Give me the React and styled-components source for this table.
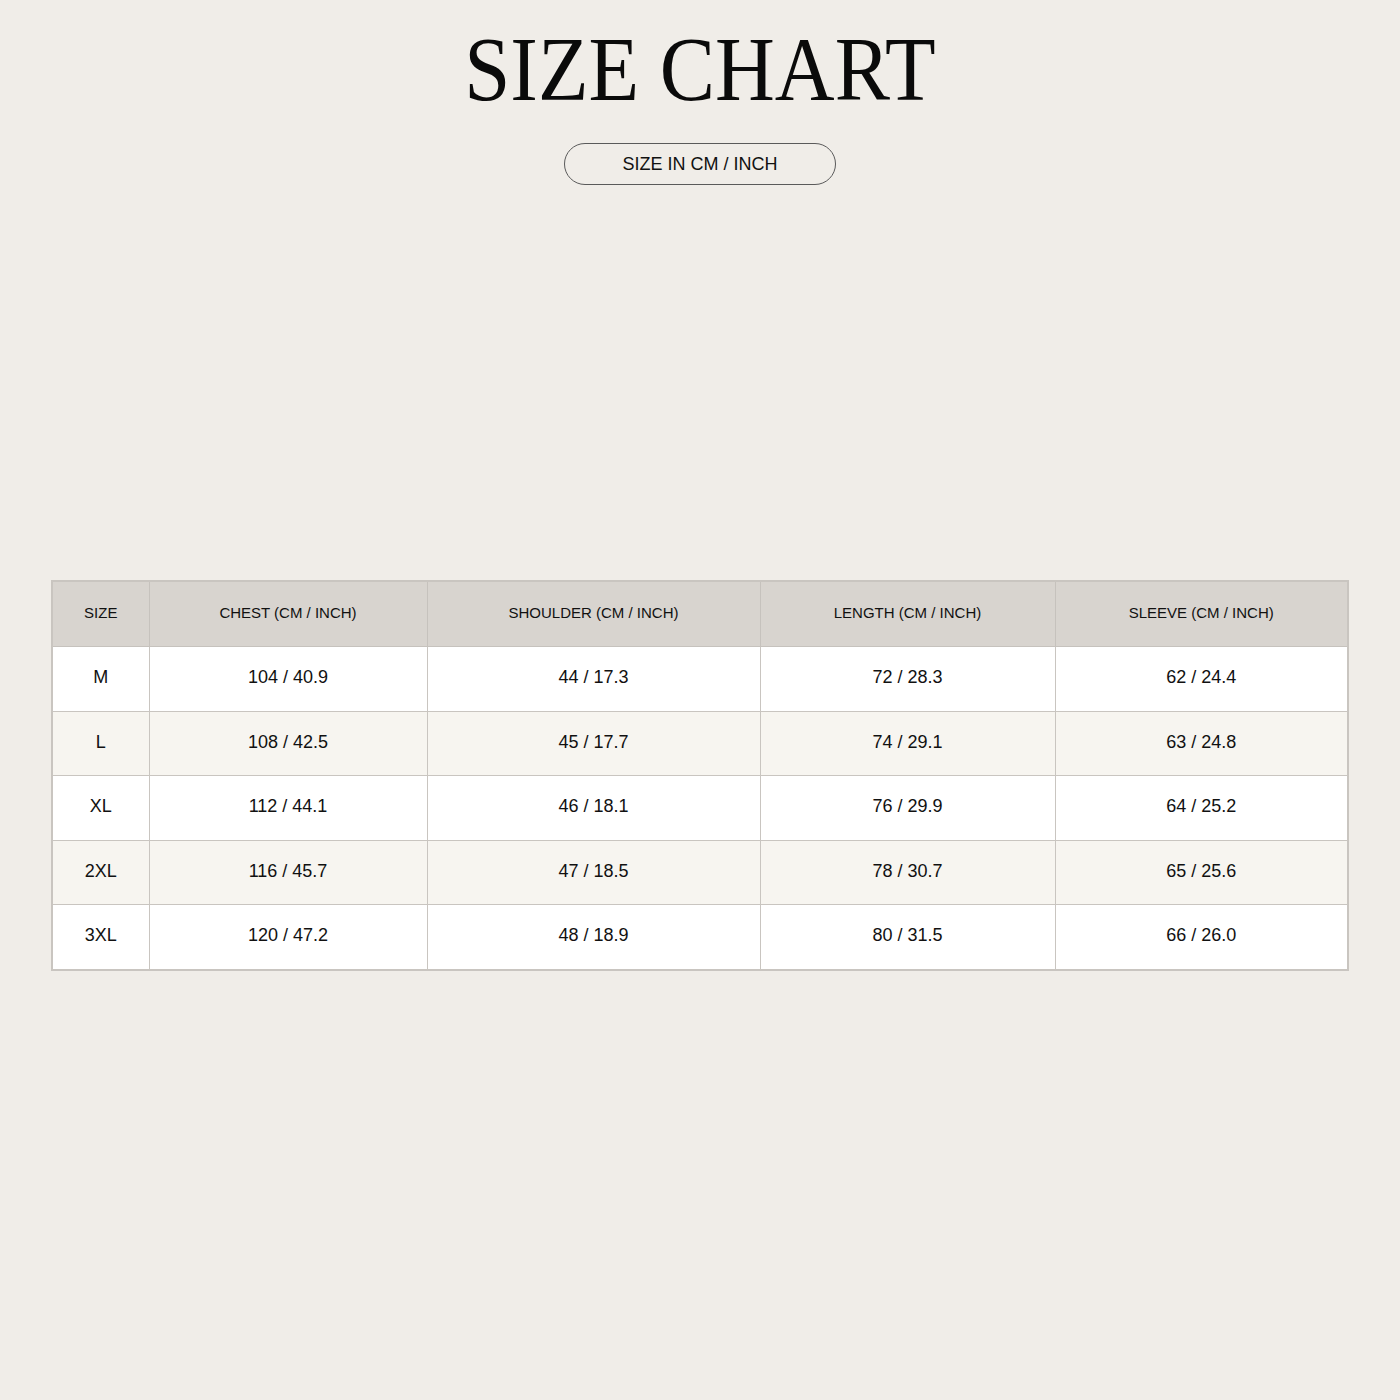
import React from "react";
import styled, { createGlobalStyle } from "styled-components";

const Global = createGlobalStyle`
  html, body {
    margin: 0;
    padding: 0;
    background: #f0ede8;
  }
  body {
    font-family: "Liberation Sans", Arial, sans-serif;
    color: #111;
  }
`;

const Page = styled.main`
  width: 1400px;
  min-height: 1400px;
  box-sizing: border-box;
  padding: 24px 52px 0;
  display: flex;
  flex-direction: column;
  align-items: center;
`;

const Title = styled.h1`
  margin: 0;
  font-family: "Liberation Serif", "Times New Roman", serif;
  font-weight: 400;
  font-size: 91px;
  line-height: 91px;
  color: #0a0a0a;
  transform: scaleX(0.91);
  white-space: nowrap;
`;

const Pill = styled.div`
  margin-top: 28px;
  width: 272px;
  height: 42px;
  box-sizing: border-box;
  border: 1px solid #5a5a5a;
  border-radius: 21px;
  display: flex;
  align-items: center;
  justify-content: center;
  font-size: 18px;
  color: #111;
`;

const Table = styled.table`
  margin-top: 395px;
  width: 1296px;
  table-layout: fixed;
  border-collapse: collapse;
  border: 2px solid #c9c5c0;
  background: #fff;
`;

const HeadCell = styled.th`
  height: 61.5px;
  padding: 0 0 2.5px;
  background: #d8d4cf;
  border: 1px solid #c6c2bd;
  font-weight: 400;
  font-size: 15px;
  color: #111;
  text-align: center;
  vertical-align: middle;
`;

const Row = styled.tr`
  background: ${(p) => (p.$striped ? "#f7f5f0" : "#ffffff")};
`;

const Cell = styled.td`
  height: 61.5px;
  padding: 0 0 2px;
  border: 1px solid #c9c5c0;
  font-size: 18px;
  color: #111;
  text-align: center;
  vertical-align: middle;
`;

const columns = [
  { label: "SIZE", width: 97 },
  { label: "CHEST (CM / INCH)", width: 278 },
  { label: "SHOULDER (CM / INCH)", width: 333 },
  { label: "LENGTH (CM / INCH)", width: 295 },
  { label: "SLEEVE (CM / INCH)", width: 293 },
];

const rows = [
  ["M", "104 / 40.9", "44 / 17.3", "72 / 28.3", "62 / 24.4"],
  ["L", "108 / 42.5", "45 / 17.7", "74 / 29.1", "63 / 24.8"],
  ["XL", "112 / 44.1", "46 / 18.1", "76 / 29.9", "64 / 25.2"],
  ["2XL", "116 / 45.7", "47 / 18.5", "78 / 30.7", "65 / 25.6"],
  ["3XL", "120 / 47.2", "48 / 18.9", "80 / 31.5", "66 / 26.0"],
];

export default function App() {
  return (
    <>
      <Global />
      <Page>
        <Title>SIZE CHART</Title>
        <Pill>SIZE IN CM / INCH</Pill>
        <Table>
          <colgroup>
            {columns.map((c) => (
              <col key={c.label} style={{ width: c.width }} />
            ))}
          </colgroup>
          <thead>
            <tr>
              {columns.map((c) => (
                <HeadCell key={c.label}>{c.label}</HeadCell>
              ))}
            </tr>
          </thead>
          <tbody>
            {rows.map((r, i) => (
              <Row key={r[0]} $striped={i % 2 === 1}>
                {r.map((v, j) => (
                  <Cell key={j}>{v}</Cell>
                ))}
              </Row>
            ))}
          </tbody>
        </Table>
      </Page>
    </>
  );
}
